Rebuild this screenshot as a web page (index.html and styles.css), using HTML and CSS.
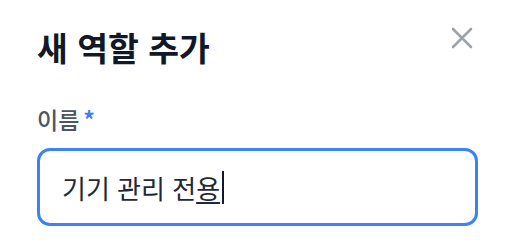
FILE: index.html
```html
<!DOCTYPE html>
<html lang="ko">
<head>
    <meta charset="UTF-8">
    <meta name="viewport" content="width=device-width, initial-scale=1.0">
    <title>새 역할 추가</title>
    <link rel="stylesheet" href="styles.css">
</head>
<body>
    <div class="dialog">
        <div class="header">
            <h2 class="title">새 역할 추가</h2>
            <button class="close" aria-label="닫기">
                <svg width="22" height="22" viewBox="0 0 22 22" fill="none" stroke="currentColor" stroke-width="2.6" stroke-linecap="round">
                    <path d="M2 2 L20 20 M20 2 L2 20"/>
                </svg>
            </button>
        </div>
        <label class="label">이름<span class="req">*</span></label>
        <div class="field">기기 관리 전<span class="compose">용</span><span class="caret"></span></div>
    </div>
</body>
</html>
```

FILE: styles.css
```css
body{
    margin: 0;
    padding: 0;
    background-color: #ffffff;
    font-family: "Noto Sans CJK KR", "Noto Sans", sans-serif;
}
.dialog{
    padding: 27px 36px 0 37px;
    display: flex;
    flex-direction: column;
}
.header{
    display: flex;
    align-items: flex-start;
    justify-content: space-between;
    height: 40px;
}
.title{
    margin: 0;
    font-size: 33.5px;
    font-weight: 700;
    line-height: 40px;
    color: #111827;
}
.close{
    width: 32px;
    height: 22px;
    padding: 0;
    border: none;
    background: none;
    color: #9ca3af;
    display: flex;
    align-items: center;
    justify-content: center;
}
.label{
    margin-top: 38px;
    font-size: 23px;
    line-height: 28px;
    font-weight: 500;
    color: #4b5563;
}
.req{
    color: #3b82f6;
    margin-left: 4px;
    font-weight: 700;
}
.field{
    margin-top: 15px;
    height: 72px;
    border: 3px solid #3b82f6;
    border-radius: 13px;
    padding: 0 22px;
    display: flex;
    align-items: center;
    font-size: 26px;
    color: #1f2937;
}
.compose{
    text-decoration: underline;
    text-decoration-thickness: 2px;
    text-underline-offset: 3px;
}
.caret{
    display: inline-block;
    width: 2px;
    height: 33px;
    margin-left: 2px;
    background-color: #111827;
}
```
